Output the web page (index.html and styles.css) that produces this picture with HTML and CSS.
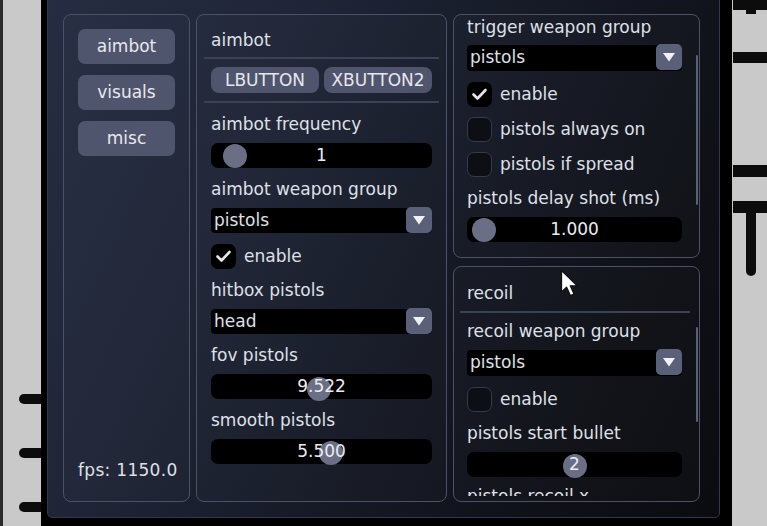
FILE: index.html
```html
<!DOCTYPE html>
<html>
<head>
<meta charset="utf-8">
<link rel="stylesheet" href="styles.css">
</head>
<body>
<div class="desk">
  <div class="edge"></div>
  <div class="mark ml m1"></div>
  <div class="mark ml m2"></div>
  <div class="mark ml m3"></div>
  <div class="mark mr r0"></div>
  <div class="mark mr r1"></div>
  <div class="mark mr r2"></div>
  <div class="mark mr r3"></div>
  <div class="mark rv"></div>
  <div class="mark rv0"></div>

  <div class="frame">
    <div class="window">
      <div class="panel tabs">
        <div class="tab">aimbot</div>
        <div class="tab">visuals</div>
        <div class="tab">misc</div>
        <div class="fps">fps: 1150.0</div>
      </div>

      <div class="panel mid">
        <div class="head">aimbot</div>
        <div class="sep"></div>
        <div class="keys">
          <div class="key">LBUTTON</div>
          <div class="key">XBUTTON2</div>
        </div>
        <div class="sep sep2"></div>
        <div class="fields">
          <div class="lbl first">aimbot frequency</div>
          <div class="ctl slider"><span class="knob" style="left:12px"></span><span class="val">1</span></div>
          <div class="lbl">aimbot weapon group</div>
          <div class="ctl combo"><span class="ctext">pistols</span><span class="arrow"><svg width="14" height="10" viewBox="0 0 14 10"><path d="M1 1 H13 L7 9.5 Z" fill="#f2f2f5"/></svg></span></div>
          <div class="chk"><span class="box on"><svg width="25" height="25" viewBox="0 0 25 25"><path d="M6.5 12.5 L10.5 16.5 L18.5 8" fill="none" stroke="#e4e4ea" stroke-width="2.6" stroke-linecap="round" stroke-linejoin="round"/></svg></span><span>enable</span></div>
          <div class="lbl">hitbox pistols</div>
          <div class="ctl combo"><span class="ctext">head</span><span class="arrow"><svg width="14" height="10" viewBox="0 0 14 10"><path d="M1 1 H13 L7 9.5 Z" fill="#f2f2f5"/></svg></span></div>
          <div class="lbl">fov pistols</div>
          <div class="ctl slider"><span class="knob" style="left:96px;top:3px"></span><span class="val">9.522</span></div>
          <div class="lbl">smooth pistols</div>
          <div class="ctl slider"><span class="knob" style="left:108px;top:2px"></span><span class="val">5.500</span></div>
        </div>
      </div>

      <div class="rcol">
        <div class="panel rtop">
          <div class="bar b1"></div>
          <div class="fields">
            <div class="lbl first">trigger weapon group</div>
            <div class="ctl combo"><span class="ctext">pistols</span><span class="arrow"><svg width="14" height="10" viewBox="0 0 14 10"><path d="M1 1 H13 L7 9.5 Z" fill="#f2f2f5"/></svg></span></div>
            <div class="chk"><span class="box on"><svg width="25" height="25" viewBox="0 0 25 25"><path d="M6.5 12.5 L10.5 16.5 L18.5 8" fill="none" stroke="#e4e4ea" stroke-width="2.6" stroke-linecap="round" stroke-linejoin="round"/></svg></span><span>enable</span></div>
            <div class="chk"><span class="box"></span><span>pistols always on</span></div>
            <div class="chk"><span class="box"></span><span>pistols if spread</span></div>
            <div class="lbl">pistols delay shot (ms)</div>
            <div class="ctl slider"><span class="knob" style="left:5px"></span><span class="val">1.000</span></div>
          </div>
        </div>
        <div class="panel rbot">
          <div class="bar b2"></div>
          <div class="clip">
            <div class="head">recoil</div>
            <div class="sep"></div>
            <div class="fields">
              <div class="lbl first">recoil weapon group</div>
              <div class="ctl combo"><span class="ctext">pistols</span><span class="arrow"><svg width="14" height="10" viewBox="0 0 14 10"><path d="M1 1 H13 L7 9.5 Z" fill="#f2f2f5"/></svg></span></div>
              <div class="chk"><span class="box"></span><span>enable</span></div>
              <div class="lbl">pistols start bullet</div>
              <div class="ctl slider"><span class="knob" style="left:96px;top:2px"></span><span class="val">2</span></div>
              <div class="lbl last">pistols recoil x</div>
            </div>
          </div>
        </div>
      </div>
    </div>
  </div>

  <svg class="cursor" width="20" height="30" viewBox="0 0 20 30">
    <path d="M1.5 1.5 L1.5 23 L6.6 18.2 L10.4 26.6 L14 25 L10.3 16.8 L17.2 16.8 Z" fill="#ffffff" stroke="#111" stroke-width="1.3" stroke-linejoin="round"/>
  </svg>
</div>
</body>
</html>
```
FILE: styles.css
```css
* { box-sizing: border-box; }

body {
  margin: 0;
  width: 767px;
  height: 526px;
  overflow: hidden;
  background: #c9c9c9;
  font-family: "DejaVu Sans", "Liberation Sans", sans-serif;
  font-size: 17px;
  color: #dfe0e7;
}

.desk {
  position: relative;
  width: 767px;
  height: 526px;
  overflow: hidden;
}

.edge {
  position: absolute;
  left: 0; top: 0;
  width: 3px; height: 526px;
  background: #2a2a2a;
}

.mark { position: absolute; background: #0c0c0c; }
.ml { left: 19px; width: 26px; height: 10px; border-radius: 5px; }
.m1 { top: 394px; }
.m2 { top: 448px; }
.m3 { top: 502px; }
.mr { left: 733px; width: 40px; height: 11px; }
.r0 { top: -2px; height: 12px; }
.r1 { top: 52px; }
.r2 { top: 165px; height: 12px; }
.r3 { top: 201px; height: 12px; }
.rv { left: 746px; top: 205px; width: 10px; height: 71px; border-radius: 0 0 5px 5px; }
.rv0 { left: 746px; top: 0; width: 10px; height: 14px; }

.frame {
  position: absolute;
  left: 41px;
  top: -10px;
  width: 691px;
  height: 536px;
  background: #000;
  padding: 0 12px 8px 6px;
}

.window {
  height: 528px;
  border: 1px solid #303750;
  border-radius: 0 0 5px 5px;
  background: linear-gradient(115deg, #262d42 0%, #1f2536 30%, #161a26 55%, #0f1117 80%, #0b0c10 100%);
  padding: 23px 19px 15px 15px;
  display: flex;
  gap: 6px;
}

.panel {
  border: 1px solid #4b5168;
  border-radius: 8px;
  background: rgba(255, 255, 255, 0.015);
  position: relative;
}

/* left tab column */
.tabs {
  width: 127px;
  display: flex;
  flex-direction: column;
  gap: 11px;
  padding: 14px 14px 21px 14px;
}
.tab {
  height: 35px;
  line-height: 35px;
  text-align: center;
  background: #4f556d;
  border-radius: 7px;
  color: #e8e8ee;
}
.fps {
  margin-top: auto;
  height: 20px;
  line-height: 20px;
  white-space: nowrap;
  letter-spacing: 0.3px;
}

/* middle panel */
.mid {
  width: 251px;
  padding: 15px 7px;
}
.head {
  padding: 0 7px;
  height: 20px;
  line-height: 20px;
}
.sep {
  height: 2px;
  background: #3c4255;
  margin: 7px 0 8px;
}
.sep2 { margin: 8px 0 0; }

.keys {
  display: flex;
  gap: 5px;
  padding: 0 7px;
}
.key {
  width: 108px;
  height: 26px;
  line-height: 26px;
  text-align: center;
  border-radius: 8px;
  background: #4f556d;
  color: #e6e6ec;
}

.fields {
  display: flex;
  flex-direction: column;
  padding: 0 7px;
}

.lbl {
  height: 20px;
  line-height: 20px;
  margin-top: 11px;
  white-space: nowrap;
  flex: none;
}

.ctl {
  margin-top: 9px;
  height: 25px;
  flex: none;
}

.slider {
  position: relative;
  background: #000;
  border-radius: 7px;
  text-align: center;
  line-height: 25px;
}
.knob {
  position: absolute;
  top: 1px;
  width: 24px;
  height: 24px;
  border-radius: 50%;
  background: #6a6f86;
}
.val {
  position: relative;
  color: #ececf0;
}

.combo {
  display: flex;
  background: #000;
  border-radius: 4px;
  line-height: 25px;
}
.ctext {
  flex: 1;
  padding-left: 3px;
}
.arrow {
  width: 26px;
  height: 26px;
  margin-top: -1px;
  border-radius: 5px;
  background: #5b6079;
  display: flex;
  align-items: center;
  justify-content: center;
}

.chk {
  margin-top: 11px;
  height: 25px;
  flex: none;
  display: flex;
  align-items: center;
  gap: 8px;
  line-height: 25px;
  white-space: nowrap;
}
.chk + .chk { margin-top: 10px; }
.box {
  width: 25px;
  height: 25px;
  flex: none;
  border-radius: 7px;
  background: #0d0f15;
  border: 1.5px solid #363b4c;
}
.box.on {
  background: #000;
  border: none;
}
.box svg { display: block; }

/* right column */
.rcol {
  width: 247px;
  display: flex;
  flex-direction: column;
  gap: 8px;
}
.rtop {
  flex: none;
  height: 244px;
  padding: 2px 17px 0 13px;
  overflow: hidden;
}
.rtop .fields { padding: 0; }
.rtop .lbl.first { margin-top: 0; }
.rtop .combo { margin-top: 8px; height: 26px; }

.rbot {
  flex: 1;
  min-height: 0;
  padding: 16px 9px 5px 6px;
}
.clip {
  height: 100%;
  overflow: hidden;
}
.rbot .fields { padding: 0 8px 0 7px; }
.rbot .lbl.first { margin-top: 8px; }
.rbot .lbl.last { margin-top: 9px; }
.rbot .combo { height: 26px; }
.rbot .sep { margin: 8px 0 0; }

.bar {
  position: absolute;
  right: 1px;
  width: 2px;
  background: #5a6075;
  border-radius: 1px;
}
.b1 { top: 40px; height: 150px; }
.b2 { top: 60px; height: 95px; }

.cursor {
  position: absolute;
  left: 560px;
  top: 269px;
}
```
